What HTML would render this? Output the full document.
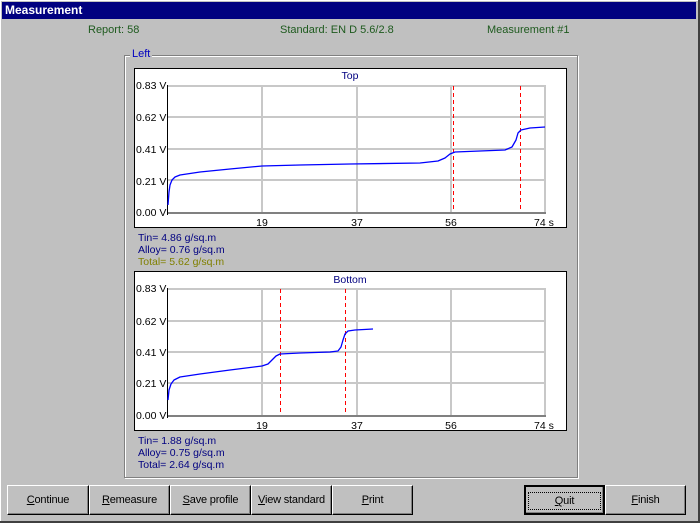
<!DOCTYPE html>
<html><head><style>
body{margin:0;width:700px;height:523px;background:#c0c0c0;font-family:"Liberation Sans",sans-serif;font-size:11px;position:relative;overflow:hidden}
.a{position:absolute;white-space:nowrap}
.win{position:absolute;left:0;top:0;width:698px;height:521px;border-right:2px solid #404040;border-bottom:2px solid #404040;box-shadow:inset 1px 1px 0 #fff}
.title{position:absolute;left:2px;top:2px;width:694px;height:17px;background:#000080;color:#fff;font-weight:bold;font-size:12px;line-height:17px;padding-left:3px;box-sizing:border-box}
.g{color:#1e5a1e}
.grp{position:absolute;left:124px;top:55px;width:452px;height:421px;border:1px solid #808080;box-shadow:1px 1px 0 #fff, inset 1px 1px 0 #fff}
.btn{position:absolute;top:485px;height:30px;border:1px solid #000;border-top-color:#fff;border-left-color:#fff;box-shadow:inset -1px -1px 0 #808080;text-align:center;line-height:29px;box-sizing:border-box;font-size:11px;letter-spacing:-0.2px}
.btn u{text-decoration:underline}
</style></head><body>
<div class="win"></div>
<div class="title">Measurement</div>
<div class="a g" style="left:88px;top:24px">Report: 58</div>
<div class="a g" style="left:280px;top:24px">Standard: EN D 5.6/2.8</div>
<div class="a g" style="left:487px;top:24px">Measurement #1</div>
<div class="grp"></div>
<div class="a" style="left:130px;top:48px;background:#c0c0c0;color:#0000c0;padding:0 2px">Left</div>
<svg class="a" style="left:0;top:0" width="700" height="523" font-family="Liberation Sans" font-size="10.5">
<rect x="134.5" y="68.5" width="432" height="159" fill="#fff" stroke="#000"/>
<rect x="134.5" y="271.5" width="432" height="159" fill="#fff" stroke="#000"/>
<g stroke="#c8c8c8" stroke-width="2" fill="none">
<path d="M168 86H545V212M168 117H545M168 149H545M168 180H545M262 86V212M357 86V212M451 86V212"/>
<path d="M168 289H545V415M168 321H545M168 352H545M168 383H545M262 289V415M357 289V415M451 289V415"/>
</g>
<g stroke="#000" stroke-width="1"><path d="M167.5 85V215M167.5 288V418"/></g>
<g stroke="#808080" stroke-width="2"><path d="M168 213H546M168 416H546"/></g>
<g stroke="#ff0000" stroke-dasharray="4,3"><path d="M453.5 86V212M520.5 86V212M280.5 289V415M345.5 289V415"/></g>
<g fill="none" stroke="#0000ff" stroke-width="1.3" stroke-linejoin="round">
<path d="M168 205L169 192L170 185L172 180L175 177L180 175L200 172L230 169L262 166L300 165L350 164L420 163L438 161L445 158L450 154L455 152L505 150L512 147L516 140L518 133L521 130L530 128L545 127"/>
<path d="M168 400L169 390L171 384L174 380L180 377L200 374L230 370L262 366L268 364L272 360L276 356L280 354L300 353L330 352L338 351L341 347L343 340L345 334L348 331L355 330L373 329"/>
</g>
<g fill="#000">
<text x="136" y="89">0.83 V</text><text x="136" y="121">0.62 V</text><text x="136" y="153">0.41 V</text><text x="136" y="185">0.21 V</text><text x="136" y="216">0.00 V</text>
<text x="136" y="292">0.83 V</text><text x="136" y="325">0.62 V</text><text x="136" y="356">0.41 V</text><text x="136" y="387">0.21 V</text><text x="136" y="419">0.00 V</text>
<text x="262" y="226" text-anchor="middle">19</text><text x="357" y="226" text-anchor="middle">37</text><text x="451" y="226" text-anchor="middle">56</text><text x="534" y="226">74 s</text>
<text x="262" y="429" text-anchor="middle">19</text><text x="357" y="429" text-anchor="middle">37</text><text x="451" y="429" text-anchor="middle">56</text><text x="534" y="429">74 s</text>
</g>
<g fill="#000080">
<text x="350" y="79" text-anchor="middle">Top</text>
<text x="350" y="283" text-anchor="middle">Bottom</text>
<text x="138" y="241">Tin= 4.86 g/sq.m</text><text x="138" y="253">Alloy= 0.76 g/sq.m</text>
<text x="138" y="444">Tin= 1.88 g/sq.m</text><text x="138" y="456">Alloy= 0.75 g/sq.m</text><text x="138" y="468">Total= 2.64 g/sq.m</text>
</g>
<text x="138" y="265" fill="#808000">Total= 5.62 g/sq.m</text>
</svg>
<div class="btn" style="left:7px;width:82px"><u>C</u>ontinue</div>
<div class="btn" style="left:89px;width:81px"><u>R</u>emeasure</div>
<div class="btn" style="left:170px;width:81px"><u>S</u>ave profile</div>
<div class="btn" style="left:251px;width:81px"><u>V</u>iew standard</div>
<div class="btn" style="left:332px;width:81px"><u>P</u>rint</div>
<div class="btn" style="left:524px;width:81px;border:2px solid #000"><span style="outline:1px dotted #000;padding:2px 26px"><u>Q</u>uit</span></div>
<div class="btn" style="left:605px;width:81px"><u>F</u>inish</div>
</body></html>
